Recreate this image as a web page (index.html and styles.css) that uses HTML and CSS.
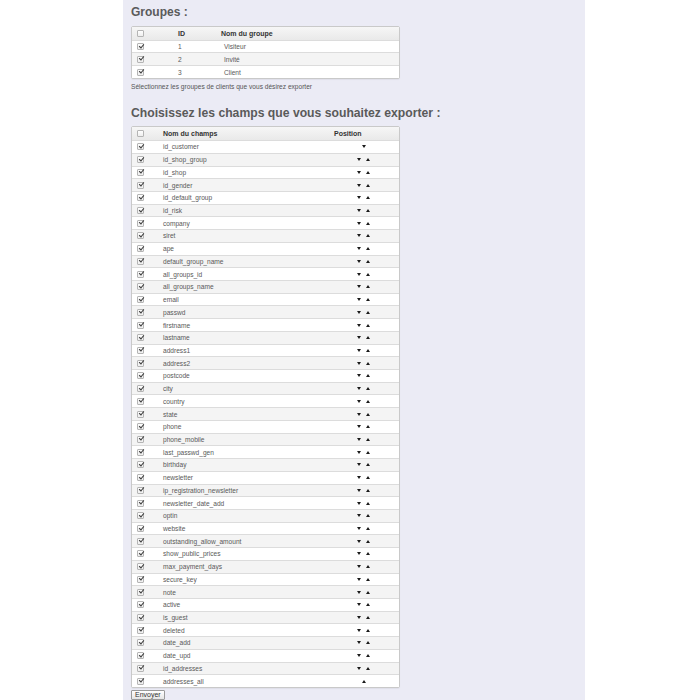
FILE: index.html
```html
<!DOCTYPE html>
<html lang="fr">
<head>
<meta charset="utf-8">
<title>Export clients</title>
<link rel="stylesheet" href="styles.css">
</head>
<body>
<div class="panel">
  <h2 class="title">Groupes :</h2>
  <div class="tbl groups">
    <div class="row head"><span class="c-cb"><i class="cb"></i></span><span class="c-id">ID</span><span class="c-gname">Nom du groupe</span></div>
    <div class="row"><span class="c-cb"><i class="cb on"></i></span><span class="c-id">1</span><span class="c-gname val">Visiteur</span></div>
    <div class="row"><span class="c-cb"><i class="cb on"></i></span><span class="c-id">2</span><span class="c-gname val">Invité</span></div>
    <div class="row"><span class="c-cb"><i class="cb on"></i></span><span class="c-id">3</span><span class="c-gname val">Client</span></div>
  </div>
  <p class="desc">Sélectionnez les groupes de clients que vous désirez exporter</p>

  <h2 class="title second">Choisissez les champs que vous souhaitez exporter :</h2>
  <div class="tbl fields">
    <div class="row head"><span class="c-cb"><i class="cb"></i></span><span class="c-name">Nom du champs</span><span class="c-pos">Position</span></div>
    <div class="row"><span class="c-cb"><i class="cb on"></i></span><span class="c-name">id_customer</span><span class="c-pos arrows"><i class="dn"></i></span></div>
    <div class="row"><span class="c-cb"><i class="cb on"></i></span><span class="c-name">id_shop_group</span><span class="c-pos arrows"><i class="dn"></i><i class="up"></i></span></div>
    <div class="row"><span class="c-cb"><i class="cb on"></i></span><span class="c-name">id_shop</span><span class="c-pos arrows"><i class="dn"></i><i class="up"></i></span></div>
    <div class="row"><span class="c-cb"><i class="cb on"></i></span><span class="c-name">id_gender</span><span class="c-pos arrows"><i class="dn"></i><i class="up"></i></span></div>
    <div class="row"><span class="c-cb"><i class="cb on"></i></span><span class="c-name">id_default_group</span><span class="c-pos arrows"><i class="dn"></i><i class="up"></i></span></div>
    <div class="row"><span class="c-cb"><i class="cb on"></i></span><span class="c-name">id_risk</span><span class="c-pos arrows"><i class="dn"></i><i class="up"></i></span></div>
    <div class="row"><span class="c-cb"><i class="cb on"></i></span><span class="c-name">company</span><span class="c-pos arrows"><i class="dn"></i><i class="up"></i></span></div>
    <div class="row"><span class="c-cb"><i class="cb on"></i></span><span class="c-name">siret</span><span class="c-pos arrows"><i class="dn"></i><i class="up"></i></span></div>
    <div class="row"><span class="c-cb"><i class="cb on"></i></span><span class="c-name">ape</span><span class="c-pos arrows"><i class="dn"></i><i class="up"></i></span></div>
    <div class="row"><span class="c-cb"><i class="cb on"></i></span><span class="c-name">default_group_name</span><span class="c-pos arrows"><i class="dn"></i><i class="up"></i></span></div>
    <div class="row"><span class="c-cb"><i class="cb on"></i></span><span class="c-name">all_groups_id</span><span class="c-pos arrows"><i class="dn"></i><i class="up"></i></span></div>
    <div class="row"><span class="c-cb"><i class="cb on"></i></span><span class="c-name">all_groups_name</span><span class="c-pos arrows"><i class="dn"></i><i class="up"></i></span></div>
    <div class="row"><span class="c-cb"><i class="cb on"></i></span><span class="c-name">email</span><span class="c-pos arrows"><i class="dn"></i><i class="up"></i></span></div>
    <div class="row"><span class="c-cb"><i class="cb on"></i></span><span class="c-name">passwd</span><span class="c-pos arrows"><i class="dn"></i><i class="up"></i></span></div>
    <div class="row"><span class="c-cb"><i class="cb on"></i></span><span class="c-name">firstname</span><span class="c-pos arrows"><i class="dn"></i><i class="up"></i></span></div>
    <div class="row"><span class="c-cb"><i class="cb on"></i></span><span class="c-name">lastname</span><span class="c-pos arrows"><i class="dn"></i><i class="up"></i></span></div>
    <div class="row"><span class="c-cb"><i class="cb on"></i></span><span class="c-name">address1</span><span class="c-pos arrows"><i class="dn"></i><i class="up"></i></span></div>
    <div class="row"><span class="c-cb"><i class="cb on"></i></span><span class="c-name">address2</span><span class="c-pos arrows"><i class="dn"></i><i class="up"></i></span></div>
    <div class="row"><span class="c-cb"><i class="cb on"></i></span><span class="c-name">postcode</span><span class="c-pos arrows"><i class="dn"></i><i class="up"></i></span></div>
    <div class="row"><span class="c-cb"><i class="cb on"></i></span><span class="c-name">city</span><span class="c-pos arrows"><i class="dn"></i><i class="up"></i></span></div>
    <div class="row"><span class="c-cb"><i class="cb on"></i></span><span class="c-name">country</span><span class="c-pos arrows"><i class="dn"></i><i class="up"></i></span></div>
    <div class="row"><span class="c-cb"><i class="cb on"></i></span><span class="c-name">state</span><span class="c-pos arrows"><i class="dn"></i><i class="up"></i></span></div>
    <div class="row"><span class="c-cb"><i class="cb on"></i></span><span class="c-name">phone</span><span class="c-pos arrows"><i class="dn"></i><i class="up"></i></span></div>
    <div class="row"><span class="c-cb"><i class="cb on"></i></span><span class="c-name">phone_mobile</span><span class="c-pos arrows"><i class="dn"></i><i class="up"></i></span></div>
    <div class="row"><span class="c-cb"><i class="cb on"></i></span><span class="c-name">last_passwd_gen</span><span class="c-pos arrows"><i class="dn"></i><i class="up"></i></span></div>
    <div class="row"><span class="c-cb"><i class="cb on"></i></span><span class="c-name">birthday</span><span class="c-pos arrows"><i class="dn"></i><i class="up"></i></span></div>
    <div class="row"><span class="c-cb"><i class="cb on"></i></span><span class="c-name">newsletter</span><span class="c-pos arrows"><i class="dn"></i><i class="up"></i></span></div>
    <div class="row"><span class="c-cb"><i class="cb on"></i></span><span class="c-name">ip_registration_newsletter</span><span class="c-pos arrows"><i class="dn"></i><i class="up"></i></span></div>
    <div class="row"><span class="c-cb"><i class="cb on"></i></span><span class="c-name">newsletter_date_add</span><span class="c-pos arrows"><i class="dn"></i><i class="up"></i></span></div>
    <div class="row"><span class="c-cb"><i class="cb on"></i></span><span class="c-name">optin</span><span class="c-pos arrows"><i class="dn"></i><i class="up"></i></span></div>
    <div class="row"><span class="c-cb"><i class="cb on"></i></span><span class="c-name">website</span><span class="c-pos arrows"><i class="dn"></i><i class="up"></i></span></div>
    <div class="row"><span class="c-cb"><i class="cb on"></i></span><span class="c-name">outstanding_allow_amount</span><span class="c-pos arrows"><i class="dn"></i><i class="up"></i></span></div>
    <div class="row"><span class="c-cb"><i class="cb on"></i></span><span class="c-name">show_public_prices</span><span class="c-pos arrows"><i class="dn"></i><i class="up"></i></span></div>
    <div class="row"><span class="c-cb"><i class="cb on"></i></span><span class="c-name">max_payment_days</span><span class="c-pos arrows"><i class="dn"></i><i class="up"></i></span></div>
    <div class="row"><span class="c-cb"><i class="cb on"></i></span><span class="c-name">secure_key</span><span class="c-pos arrows"><i class="dn"></i><i class="up"></i></span></div>
    <div class="row"><span class="c-cb"><i class="cb on"></i></span><span class="c-name">note</span><span class="c-pos arrows"><i class="dn"></i><i class="up"></i></span></div>
    <div class="row"><span class="c-cb"><i class="cb on"></i></span><span class="c-name">active</span><span class="c-pos arrows"><i class="dn"></i><i class="up"></i></span></div>
    <div class="row"><span class="c-cb"><i class="cb on"></i></span><span class="c-name">is_guest</span><span class="c-pos arrows"><i class="dn"></i><i class="up"></i></span></div>
    <div class="row"><span class="c-cb"><i class="cb on"></i></span><span class="c-name">deleted</span><span class="c-pos arrows"><i class="dn"></i><i class="up"></i></span></div>
    <div class="row"><span class="c-cb"><i class="cb on"></i></span><span class="c-name">date_add</span><span class="c-pos arrows"><i class="dn"></i><i class="up"></i></span></div>
    <div class="row"><span class="c-cb"><i class="cb on"></i></span><span class="c-name">date_upd</span><span class="c-pos arrows"><i class="dn"></i><i class="up"></i></span></div>
    <div class="row"><span class="c-cb"><i class="cb on"></i></span><span class="c-name">id_addresses</span><span class="c-pos arrows"><i class="dn"></i><i class="up"></i></span></div>
    <div class="row"><span class="c-cb"><i class="cb on"></i></span><span class="c-name">addresses_all</span><span class="c-pos arrows"><i class="up"></i></span></div>
  </div>
  <button class="btn" type="button">Envoyer</button>
</div>
</body>
</html>
```

FILE: styles.css
```css
html, body {
  margin: 0;
  padding: 0;
  background: #ffffff;
}

body {
  font-family: "Liberation Sans", Arial, sans-serif;
  color: #444;
}

.panel {
  margin-left: 123px;
  width: 462px;
  min-height: 700px;
  box-sizing: border-box;
  padding: 0 8px;
  background: #ebebf5;
  display: flex;
  flex-direction: column;
  align-items: flex-start;
}

.title {
  margin: 0;
  padding-top: 4.5px;
  font-size: 12px;
  line-height: 14px;
  font-weight: bold;
  color: #5a5a5a;
}

.title.second {
  margin-top: 15.5px;
  padding-top: 0;
  font-size: 12.2px;
}

.tbl {
  width: 269px;
  box-sizing: border-box;
  border: 1px solid #c9c9c9;
  border-radius: 2px;
  background: #fff;
  margin-top: 7.5px;
  box-shadow: 0 1px 1px rgba(0, 0, 0, 0.05);
}

.tbl.fields {
  margin-top: 6px;
}

.row {
  display: flex;
  align-items: center;
  height: 12.72px;
  box-sizing: border-box;
  border-top: 1px solid #dcdcdc;
  font-size: 6.6px;
  color: #595959;
  background: #fff;
}

.row:first-child {
  border-top: none;
}

.row:nth-child(odd):not(.head) {
  background: #f4f4f4;
}

.row.head {
  background: linear-gradient(#f6f6f6, #e9e9e9);
  font-weight: bold;
  font-size: 7px;
  color: #333;
}

.c-cb {
  width: 26px;
  padding-left: 5px;
  box-sizing: border-box;
  display: flex;
  align-items: center;
}

.c-id {
  width: 63px;
  padding-left: 20px;
  box-sizing: border-box;
}

.c-gname {
  flex: 1;
}

.c-gname.val {
  padding-left: 3px;
}

.c-name {
  width: 171px;
  padding-left: 5px;
  box-sizing: border-box;
}

.c-pos {
  flex: 1;
  padding-left: 5px;
}

.arrows {
  display: flex;
  justify-content: center;
  align-items: center;
  gap: 5px;
  padding-left: 0;
  padding-right: 1px;
}

.cb {
  position: relative;
  display: block;
  width: 5px;
  height: 5px;
  border: 1px solid #b4b4b4;
  border-radius: 1px;
  background: linear-gradient(#ffffff, #eeeeee);
}

.cb.on::after {
  content: "";
  position: absolute;
  left: 1.5px;
  top: -1.5px;
  width: 1.5px;
  height: 4.2px;
  border-right: 1px solid #3a3a3a;
  border-bottom: 1px solid #3a3a3a;
  transform: rotate(40deg);
}

.dn {
  display: block;
  width: 0;
  height: 0;
  border-left: 2.5px solid transparent;
  border-right: 2.5px solid transparent;
  border-top: 3px solid #1a1a1a;
}

.up {
  display: block;
  width: 0;
  height: 0;
  border-left: 2.5px solid transparent;
  border-right: 2.5px solid transparent;
  border-bottom: 3px solid #1a1a1a;
}

.desc {
  margin: 4px 0 0;
  font-size: 6.6px;
  line-height: 8px;
  color: #555;
}

.btn {
  margin-top: 2px;
  height: 9.5px;
  padding: 0 3px;
  font-family: "Liberation Sans", Arial, sans-serif;
  font-size: 7px;
  line-height: 8px;
  color: #333;
  border: 1px solid #9a9a9a;
  border-radius: 1px;
  background: linear-gradient(#ffffff, #e4e4e4);
}
```
